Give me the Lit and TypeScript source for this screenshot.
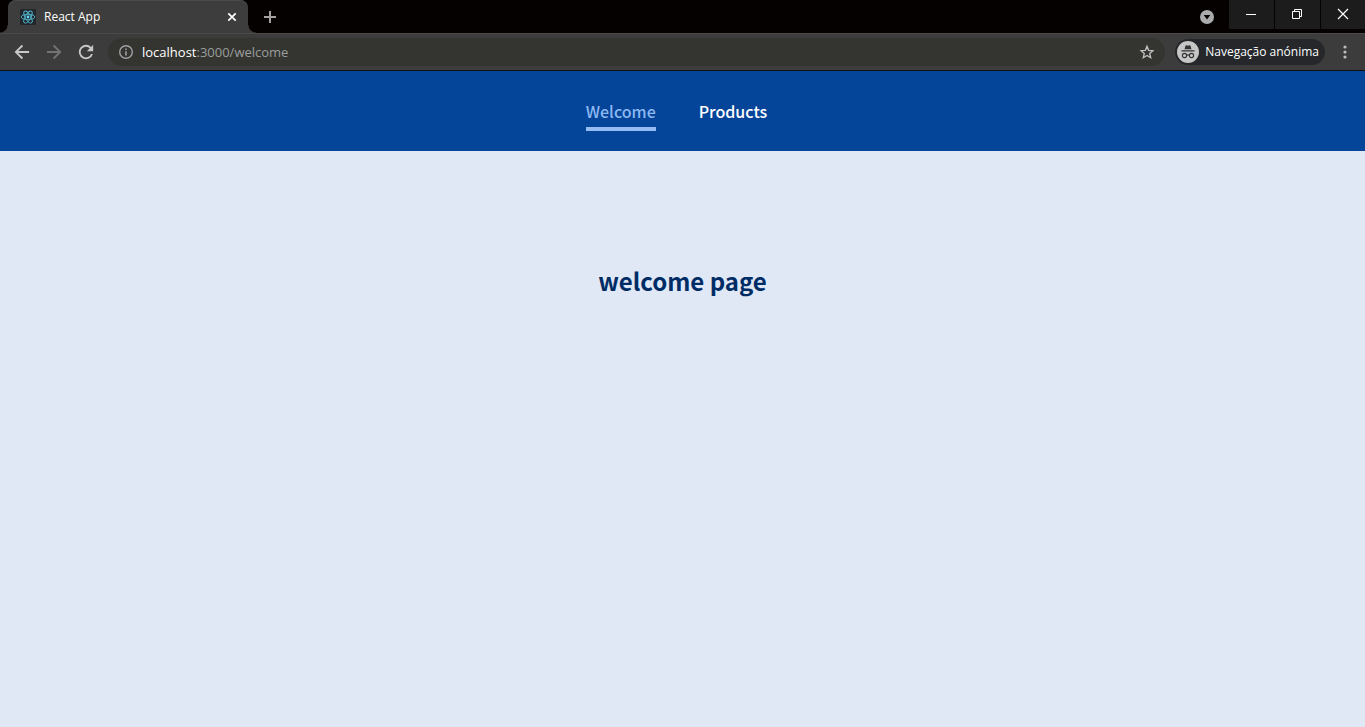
import { LitElement, html, css, svg } from "lit";
import { customElement, property } from "lit/decorators.js";

@customElement("browser-tabs")
class BrowserTabs extends LitElement {
  static styles = css`
    :host {
      display: flex;
      height: 33px;
      background: #060101;
      color: #fff;
      font: 12px/16px "Open Sans", sans-serif;
    }
    button {
      display: grid;
      place-items: center;
      border: 0;
      padding: 0;
      background: none;
      color: inherit;
      font: inherit;
    }
    svg {
      display: block;
    }
    .strip {
      flex: 1;
      display: flex;
      align-items: center;
      padding-left: 8px;
    }
    .tab {
      position: relative;
      display: flex;
      align-items: center;
      gap: 8px;
      width: 240px;
      height: 33px;
      box-sizing: border-box;
      padding: 0 8px 0 12px;
      border-radius: 8px 8px 0 0;
      background: #3c3d3c;
      box-shadow: inset 0 1px #4a4b4a;
    }
    .tab::before,
    .tab::after {
      content: "";
      position: absolute;
      bottom: 0;
      width: 8px;
      height: 8px;
    }
    .tab::before {
      right: 100%;
      background: radial-gradient(circle at 0 0, #060101 7px, #3c3d3c 8px);
    }
    .tab::after {
      left: 100%;
      background: radial-gradient(circle at 100% 0, #060101 7px, #3c3d3c 8px);
    }
    .title {
      flex: 1;
    }
    .close {
      width: 16px;
      height: 16px;
    }
    .add {
      width: 28px;
      height: 28px;
      margin-left: 8px;
    }
    .search {
      align-self: center;
      width: 28px;
      height: 28px;
      margin-right: 8px;
    }
    .window {
      display: flex;
      gap: 1px;
      height: 29px;
    }
    .window button {
      width: 45px;
      background: #1c1c1c;
    }
    .window button:last-child {
      width: 44px;
    }
  `;
  render() {
    return html`
      <div class="strip">
        <div class="tab">
          <svg width="16" height="16" viewBox="0 0 16 16">
            <rect width="16" height="16" rx="1" fill="#20262b" />
            <g fill="none" stroke="#53b4cb" stroke-width="0.9">
              ${[0, 60, 120].map(
                (a) => svg`<ellipse cx="8" cy="8" rx="6.8" ry="2.7" transform="rotate(${a} 8 8)" />`
              )}
            </g>
            <circle cx="8" cy="8" r="1.4" fill="#61dafb" />
          </svg>
          <span class="title">React App</span>
          <button class="close" aria-label="Close tab">
            <svg width="16" height="16" stroke="#fff" stroke-width="1.7"><path d="M4.3 4.3l7.4 7.4M11.7 4.3l-7.4 7.4" /></svg>
          </button>
        </div>
        <button class="add" aria-label="New tab">
          <svg width="14" height="14" stroke="#a3a1a1" stroke-width="2"><path d="M7 1v12M1 7h12" /></svg>
        </button>
      </div>
      <button class="search" aria-label="Search tabs">
        <svg width="14" height="14" viewBox="0 0 14 14">
          <circle cx="7" cy="7" r="7" fill="#a9abac" />
          <path d="M3.7 5h6.6L7 9.5z" fill="#060101" />
        </svg>
      </button>
      <div class="window">
        <button aria-label="Minimize">
          <svg width="13" height="13" stroke="#fff"><path d="M1 6.5h10" /></svg>
        </button>
        <button aria-label="Restore">
          <svg width="13" height="13" stroke="#fff" fill="none"><path d="M1.5 3.5h7v7h-7zM3.5 3.5v-2h7v7h-2" /></svg>
        </button>
        <button aria-label="Close">
          <svg width="12" height="13" stroke="#fff" stroke-width="1.2"><path d="M1 1l10 10M11 1L1 11" /></svg>
        </button>
      </div>
    `;
  }
}

@customElement("browser-toolbar")
class BrowserToolbar extends LitElement {
  static styles = css`
    :host {
      display: flex;
      align-items: center;
      height: 38px;
      box-sizing: border-box;
      padding: 0 10px 0 12px;
      background: #3c3c3c;
      border-top: 1px solid #4d4949;
      border-bottom: 1px solid #101010;
      color: #fff;
      font: 12px/16px "Open Sans", sans-serif;
    }
    button {
      display: grid;
      place-items: center;
      border: 0;
      padding: 0;
      background: none;
      color: inherit;
      font: inherit;
    }
    svg {
      display: block;
    }
    .nav {
      display: flex;
      gap: 12px;
      margin-right: 12px;
    }
    .address {
      flex: 1;
      display: flex;
      align-items: center;
      gap: 8px;
      height: 28px;
      padding: 0 10px;
      border-radius: 14px;
      background: #343530;
    }
    .url {
      flex: 1;
      font-size: 13px;
      line-height: 18px;
      color: #9b9d9e;
    }
    .host {
      color: #fff;
    }
    .incognito {
      display: flex;
      align-items: center;
      gap: 6px;
      height: 26px;
      margin: 0 10px;
      padding: 0 6px 0 2px;
      border-radius: 13px;
      background: #25272a;
    }
  `;
  render() {
    return html`
      <div class="nav">
        <button aria-label="Back">
          <svg width="20" height="20" viewBox="0 0 24 24"><path fill="#c8c8c8" d="M20.5 10.9H7.4l5.9-5.9L11.7 3.4 3.1 12l8.6 8.6 1.6-1.6-5.9-5.9h13.1z" /></svg>
        </button>
        <button aria-label="Forward">
          <svg width="20" height="20" viewBox="0 0 24 24"><path fill="#737373" d="M3.5 10.9h13.1L10.7 5l1.6-1.6 8.6 8.6-8.6 8.6-1.6-1.6 5.9-5.9H3.5z" /></svg>
        </button>
        <button aria-label="Reload">
          <svg width="20" height="20" viewBox="0 0 24 24"><path fill="#c8c8c8" d="M18.1 5.9A8.6 8.6 0 1 0 20.3 14.3H18A6.4 6.4 0 1 1 16.5 7.5L13 11h7.6V3.4z" /></svg>
        </button>
      </div>
      <div class="address">
        <svg width="16" height="16" viewBox="0 0 16 16">
          <circle cx="8" cy="8" r="6.3" fill="none" stroke="#9fa1a4" stroke-width="1.4" />
          <path d="M7.2 7.2h1.6v4.3H7.2zM7.2 4.5h1.6v1.6H7.2z" fill="#9fa1a4" />
        </svg>
        <span class="url"><span class="host">localhost</span>:3000/welcome</span>
        <button aria-label="Bookmark this page">
          <svg width="16" height="16" viewBox="0 0 16 16">
            <path fill="none" stroke="#c4c4c4" stroke-width="1.3" d="M8 2.3l1.6 4 4.3.4-3.2 2.8 1 4.2L8 11.5l-3.7 2.2 1-4.2-3.2-2.8 4.3-.4z" />
          </svg>
        </button>
      </div>
      <button class="incognito">
        <svg width="22" height="22" viewBox="0 0 22 22">
          <circle cx="11" cy="11" r="11" fill="#c6c6c6" />
          <path fill="#333" d="M7.5 8.3L8.6 4.6q.2-.6.8-.4l1.6.5 1.6-.5q.6-.2.8.4l1.1 3.7zM4.500 9.3h13v1.2h-13z" />
          <g fill="none" stroke="#333" stroke-width="1.1">
            <circle cx="7.5" cy="14.5" r="2.1" />
            <circle cx="14.5" cy="14.5" r="2.1" />
            <path d="M9.7 14.3q1.3-.8 2.6 0" />
          </g>
        </svg>
        Navegação anónima
      </button>
      <button aria-label="Menu">
        <svg width="20" height="20" fill="#bdbdbd">
          <circle cx="10" cy="5" r="1.6" /><circle cx="10" cy="10" r="1.6" /><circle cx="10" cy="15" r="1.6" />
        </svg>
      </button>
    `;
  }
}

@customElement("main-header")
class MainHeader extends LitElement {
  @property() active = "Welcome";
  static styles = css`
    :host {
      display: block;
      background: #044599;
    }
    nav {
      display: flex;
      justify-content: center;
      align-items: center;
      gap: 43px;
      height: 80px;
      padding-right: 12px;
    }
    a {
      color: #fff;
      font: 500 16px/24px "Noto Sans CJK JP", sans-serif;
      text-decoration: none;
      padding: 8px 0 4px;
      border-bottom: 4px solid transparent;
    }
    .active {
      color: #8db8f2;
      border-color: #95bcf0;
    }
  `;
  render() {
    return html`<nav>
      ${["Welcome", "Products"].map(
        (name) => html`<a class=${name === this.active ? "active" : ""} href="#${name.toLowerCase()}">${name}</a>`
      )}
    </nav>`;
  }
}

@customElement("app-root")
class AppRoot extends LitElement {
  static styles = css`
    :host {
      display: flex;
      flex-direction: column;
      min-height: 100vh;
      background: #e0e8f6;
    }
    main {
      padding-top: 112px;
      text-align: center;
    }
    h1 {
      margin: 0;
      color: #002c66;
      font: 700 24px/36px "Noto Sans CJK JP", sans-serif;
    }
  `;
  render() {
    return html`
      <browser-tabs></browser-tabs>
      <browser-toolbar></browser-toolbar>
      <main-header></main-header>
      <main><h1>welcome page</h1></main>
    `;
  }
}
